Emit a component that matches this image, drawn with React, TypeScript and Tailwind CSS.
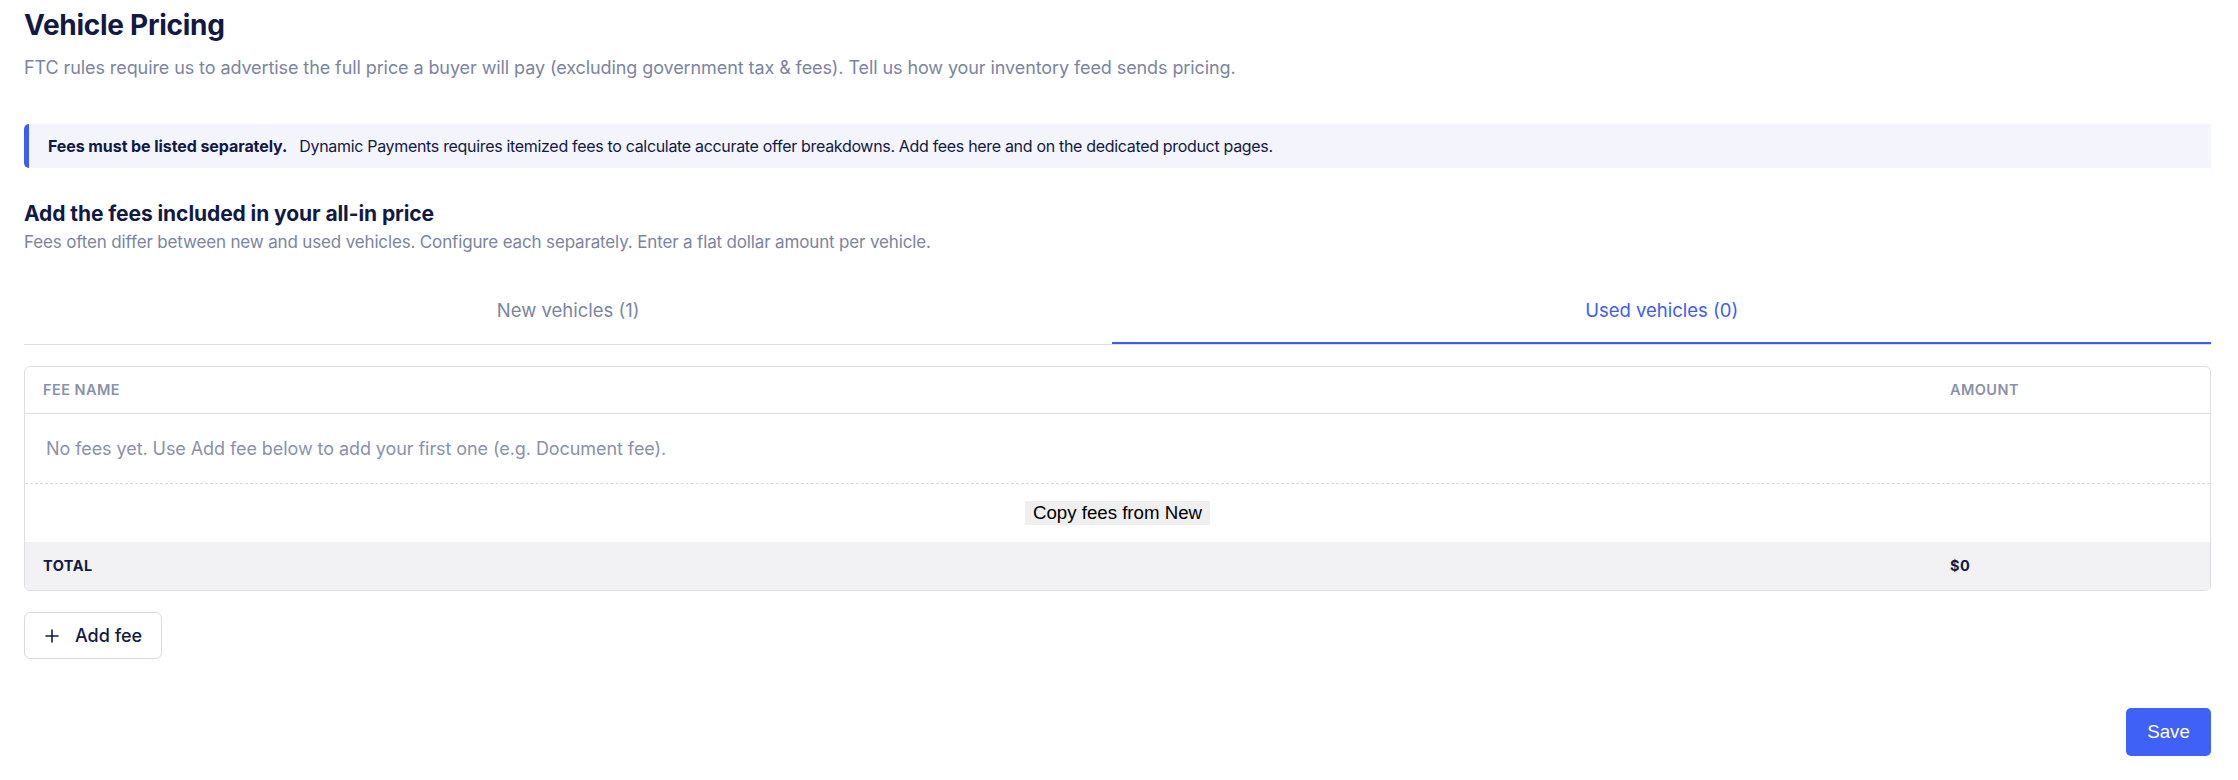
import React, { useState } from "react";

const sans = "font-['Inter','Noto_Sans',sans-serif]";
const native = "font-['Liberation_Sans',Arial,sans-serif]";

const PlusIcon = () => (
  <svg width="14" height="14" viewBox="0 0 14 14" fill="none" stroke="currentColor" strokeWidth="1.6" strokeLinecap="round">
    <path d="M7 1v12M1 7h12" />
  </svg>
);

export default function App() {
  const [tab, setTab] = useState<"new" | "used">("used");

  return (
    <div className={`${sans} min-h-screen bg-white pl-6 pr-[27px] pt-[8px] pb-[23px]`}>
      {/* header */}
      <h1 className="text-[28px] font-bold leading-[34px] tracking-[-0.01em] text-[#111944]">
        Vehicle Pricing
      </h1>
      <p className="mt-[12px] text-[18px] leading-[28px] tracking-[-0.005em] text-[#7c84a2]">
        FTC rules require us to advertise the full price a buyer will pay (excluding government tax &amp; fees). Tell us how your inventory feed sends pricing.
      </p>

      {/* notice */}
      <div className="mt-[42px] flex h-[44px] items-center rounded-l-[5px] border-l-[5px] border-[#3d5cf5] bg-[#f4f5fc] pl-[19px] text-[16px] text-[#111944]">
        <span className="font-bold tracking-[-0.005em]">Fees must be listed separately.</span>
        <span className="ml-[12px] tracking-[-0.02em]">
          Dynamic Payments requires itemized fees to calculate accurate offer breakdowns. Add fees here and on the dedicated product pages.
        </span>
      </div>

      {/* fees section */}
      <h2 className="mt-[32px] text-[21px] font-bold leading-[28px] tracking-[-0.004em] text-[#111944]">
        Add the fees included in your all-in price
      </h2>
      <p className="mt-[2px] text-[17px] leading-[24px] tracking-[-0.009em] text-[#7c84a2]">
        Fees often differ between new and used vehicles. Configure each separately. Enter a flat dollar amount per vehicle.
      </p>

      <div className="mt-[26px] flex border-b border-[#dcdde6]">
        <button
          onClick={() => setTab("new")}
          className={`h-[64px] flex-auto border-b-2 text-[18.5px] ${
            tab === "new" ? "border-[#3d5cf5] text-[#3d5cf5]" : "border-transparent text-[#7c84a2]"
          }`}
        >
          New vehicles (1)
        </button>
        <button
          onClick={() => setTab("used")}
          className={`h-[64px] flex-auto border-b-2 text-[18.5px] ${
            tab === "used" ? "border-[#3d5cf5] text-[#3d5cf5]" : "border-transparent text-[#7c84a2]"
          }`}
        >
          Used vehicles (0)
        </button>
      </div>

      {/* table */}
      <div className="mt-[21px] overflow-hidden rounded-[6px] border border-[#dcdde6]">
        <div className="grid h-[47px] grid-cols-[1fr_277px] items-center border-b border-[#dcdde6] text-[14.5px] font-semibold uppercase tracking-[0.03em] text-[#8a91ab]">
          <div className="pl-[18px]">Fee name</div>
          <div className="pl-[17px]">Amount</div>
        </div>
        <div className="flex h-[70px] items-center border-b border-dashed border-[#d6d8e0] pl-[21px] text-[18px] tracking-[-0.004em] text-[#8a91ab]">
          No fees yet. Use Add fee below to add your first one (e.g. Document fee).
        </div>
        <div className="flex h-[58px] items-center justify-center">
          <button className={`${native} bg-[#efefef] px-[8px] py-[1px] text-[18.67px] leading-[22px] text-black`}>
            Copy fees from New
          </button>
        </div>
        <div className="grid h-[48px] grid-cols-[1fr_277px] items-center bg-[#f2f2f5] text-[14.5px] font-bold uppercase tracking-[0.03em] text-[#111944]">
          <div className="pl-[18px]">Total</div>
          <div className="pl-[17px]">$0</div>
        </div>
      </div>

      <button className="mt-[21px] flex h-[47px] w-[138px] items-center gap-[16px] rounded-[6px] border border-[#d8dae6] bg-white pl-[20px] text-[18px] font-medium text-[#111944]">
        <PlusIcon />
        Add fee
      </button>

      <div className="mt-[49px] flex justify-end">
        <button className={`${native} h-[48px] w-[85px] rounded-[5px] bg-[#4061f5] text-[18.67px] text-white`}>
          Save
        </button>
      </div>
    </div>
  );
}
